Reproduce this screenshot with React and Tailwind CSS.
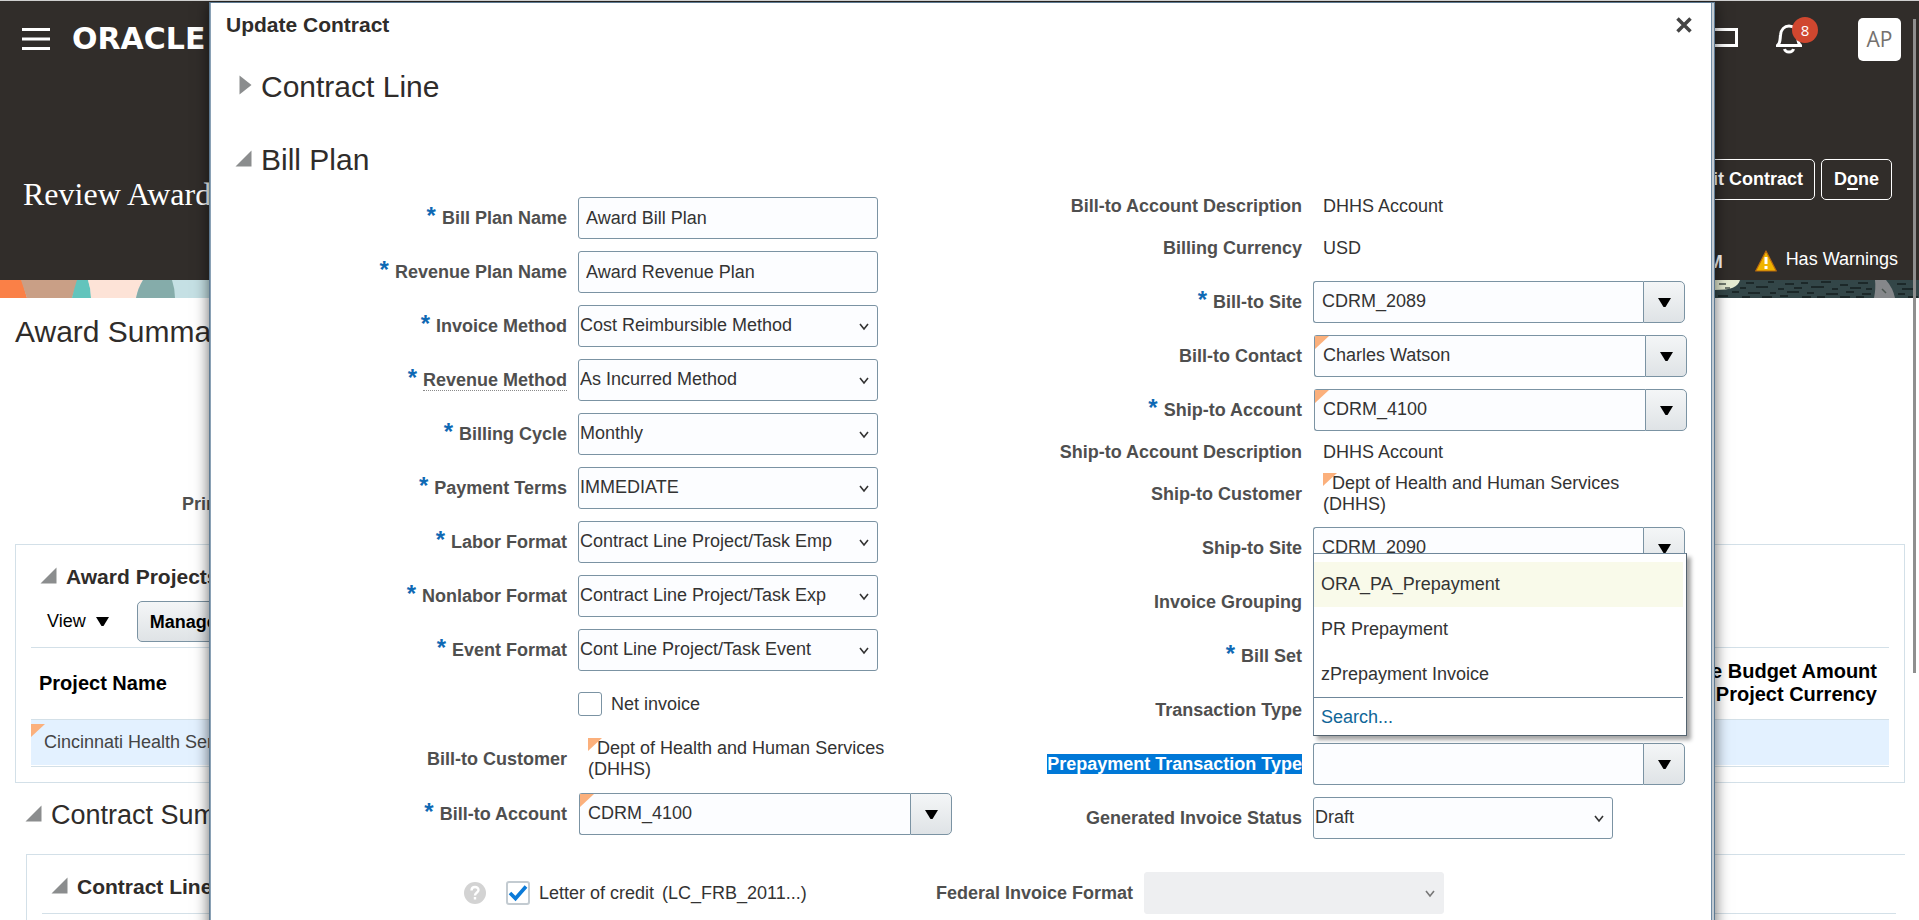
import { useId, useState } from "react";

const prepaymentTypes = ["ORA_PA_Prepayment", "PR Prepayment", "zPrepayment Invoice"];

function Expanded() {
  return (
    <svg width="17" height="17" viewBox="0 0 17 17" className="mb-1 shrink-0" aria-hidden="true">
      <path d="M16.500 0.500V16.500H0.500Z" fill="#8b8d8e" />
    </svg>
  );
}

function Collapsed() {
  return (
    <svg width="17" height="20" viewBox="0 0 17 20" className="mb-1 shrink-0" aria-hidden="true">
      <path d="M4.500 0.500V19.500L16.500 10Z" fill="#8b8d8e" />
    </svg>
  );
}

function DownArrow() {
  return (
    <svg width="13" height="9" viewBox="0 0 13 9" aria-hidden="true">
      <path d="M0 0H13L7.500 9H5.500Z" fill="#000" />
    </svg>
  );
}

// orange corner shown on values that open a contextual popup
function Corner({ className }) {
  return (
    <svg width="14" height="13" viewBox="0 0 14 13" className={`pointer-events-none absolute ${className}`} aria-hidden="true">
      <path d="M0 0H14L0 13Z" fill="#fbb07c" />
    </svg>
  );
}

function Label({ id, required, selected, dotted, children }) {
  return (
    <label htmlFor={id} className="text-right font-bold text-[#4f4f4f]">
      {required && <span className="mr-1.5 text-2xl leading-[0px] text-[#0f69b4]">*</span>}
      <span className={selected ? "bg-[#0078d7] text-white" : dotted ? "border-b border-dotted border-[#8a8a8a]" : ""}>
        {children}
      </span>
    </label>
  );
}

function TextField({ label, value }) {
  const id = useId();
  return (
    <>
      <Label id={id} required>{label}</Label>
      <input
        id={id}
        defaultValue={value}
        className="h-[42px] w-[300px] rounded-[3px] border border-[#7b93a3] bg-[#fcfdff] px-[7px]"
      />
    </>
  );
}

function Select({ id, value, disabled }) {
  return (
    <div className="relative w-[300px]">
      <select
        id={id}
        disabled={disabled}
        defaultValue={value}
        className="block h-[42px] w-full appearance-none rounded-[3px] border border-[#7b93a3] bg-[#fcfdff] pr-8 pb-0.5 pl-px disabled:border-[#eeeff1] disabled:bg-[#eeeff1]"
      >
        <option>{value}</option>
      </select>
      <svg width="10" height="8" viewBox="0 0 10 8" className="pointer-events-none absolute top-[18px] right-[9px]" aria-hidden="true">
        <path d="M1 1L5 6L9 1" fill="none" stroke={disabled ? "#777" : "#333"} strokeWidth="1.600" />
      </svg>
    </div>
  );
}

function SelectField({ label, value, required, dotted }) {
  const id = useId();
  return (
    <>
      <Label id={id} required={required} dotted={dotted}>{label}</Label>
      <Select id={id} value={value} />
    </>
  );
}

function ComboField({ label, value, required, corner, selected, children }) {
  const id = useId();
  return (
    <>
      <Label id={id} required={required} selected={selected}>{label}</Label>
      <div className={corner ? "relative ml-px flex h-[42px] w-[373px]" : "relative flex h-[42px] w-[372px]"}>
        <input
          id={id}
          defaultValue={value}
          className="min-w-0 flex-1 rounded-l-[3px] border border-r-0 border-[#7b93a3] bg-[#fcfdff] pr-2 pb-0.5 pl-2"
        />
        <button
          type="button"
          aria-label={label}
          className="flex w-[42px] items-center justify-center rounded-r-[5px] border border-[#7b93a3] bg-linear-to-b from-[#f4f6f7] to-[#dfe3e6]"
        >
          <DownArrow />
        </button>
        {corner && <Corner className="top-px left-px" />}
        {children}
      </div>
    </>
  );
}

function CustomerValue({ label, tall }) {
  return (
    <>
      <Label>{label}</Label>
      <div className={tall ? "my-px" : ""}>
        <div className="relative ml-2.5 w-[300px] indent-[9px] leading-[21px]">
          <Corner className="top-0 left-0" />
          Dept of Health and Human Services (DHHS)
        </div>
      </div>
    </>
  );
}

function ReadOnly({ label, value, tall }) {
  return (
    <div className={tall ? "col-span-2 grid min-h-[30px] grid-cols-subgrid items-start leading-[18px]" : "col-span-2 grid grid-cols-subgrid leading-[18px]"}>
      <Label>{label}</Label>
      <span className="ml-2.5">{value}</span>
    </div>
  );
}

function PrepaymentList({ active, onPick }) {
  return (
    <div className="absolute bottom-full left-0 z-10 mb-[7px] w-[374px] border border-[#6f879a] border-r-[#54636f] border-b-[#54636f] bg-white pt-2 pr-[3px] shadow-[4px_4px_4px_rgba(0,0,0,0.35)]">
      <ul>
        {prepaymentTypes.map((type) => (
          <li key={type}>
            <button
              type="button"
              onClick={() => onPick(type)}
              className={`flex h-[45px] w-full items-center pb-0.5 pl-[7px] ${type === active ? "bg-[#f9faea]" : ""}`}
            >
              {type}
            </button>
          </li>
        ))}
      </ul>
      <a href="#search" className="flex h-[38px] items-center border-t border-[#6f879a] pl-[7px] text-[#0f6698]">
        Search...
      </a>
    </div>
  );
}

function Header() {
  return (
    <header className="h-[279px] bg-[#312d2a] text-white">
      <div className="flex h-[76px] items-center pr-[18px] pl-[22px]">
        <button type="button" aria-label="Navigator">
          <svg width="28" height="22" viewBox="0 0 28 22" stroke="#fff" strokeWidth="3">
            <path d="M0 1.500H28M0 11H28M0 20.500H28" />
          </svg>
        </button>
        <span className="ml-[22px] font-['DejaVu_Sans',sans-serif] text-[30px] font-bold">ORACLE</span>
        <div className="ml-auto flex items-center">
          <svg width="38" height="19" viewBox="0 0 38 19" className="mr-[38px] mb-1" fill="none" stroke="#fff" strokeWidth="3">
            <path d="M1.500 1.500H36.500V17.500H1.500Z" />
          </svg>
          <button type="button" aria-label="Notifications" className="relative mr-14">
            <svg width="26" height="30" viewBox="0 0 26 30" fill="none" stroke="#fff" strokeWidth="3">
              <path d="M1.500 21.500C4.500 19 4 15 4.500 11C5 5.500 8.500 2 13 2C17.500 2 21 5.500 21.500 11C22 15 21.500 19 24.500 21.500Z" />
              <path d="M8.500 25C9.500 29 16.500 29 17.500 25" />
            </svg>
            <span className="absolute -top-[7px] left-4 flex size-[26px] items-center justify-center rounded-full bg-[#d0472f] font-['Open_Sans',sans-serif] text-[15px]">
              8
            </span>
          </button>
          <button
            type="button"
            className="size-[43px] rounded-[5px] bg-white font-['Open_Sans',sans-serif] text-[21px] text-[#75716e]"
          >
            AP
          </button>
        </div>
      </div>
      <div className="mt-[82px] flex items-start justify-between pr-[27px] pl-[23px]">
        <h1 className="mt-[15px] font-['Liberation_Serif',serif] text-[32px] leading-10">Review Award</h1>
        <div className="flex gap-1.5 font-bold">
          <button type="button" className="h-[41px] rounded-[5px] border border-white px-[11px] pb-0.5">Edit Contract</button>
          <button type="button" className="h-[41px] rounded-[5px] border border-white px-3 pb-0.5">
            D<span className="underline decoration-2 underline-offset-3">o</span>ne
          </button>
        </div>
      </div>
      <div className="mt-[33px] flex h-6 items-center justify-end pr-[21px]">
        <span className="mr-8 pt-1.5 font-bold">5:30 PM</span>
        <svg width="22" height="22" viewBox="0 0 22 22" className="mt-1" aria-hidden="true">
          <path d="M11 1L21.300 21H0.700Z" fill="#f0b400" stroke="#b8690f" strokeWidth="1.200" strokeLinejoin="round" />
          <path d="M11 7V14M11 16V19" stroke="#fff" strokeWidth="3" />
        </svg>
        <span className="ml-[9px]">Has Warnings</span>
      </div>
    </header>
  );
}

function Banner() {
  return (
    <div className="flex h-[18px] justify-between bg-[#334648]">
      <svg width="300" height="18" viewBox="0 0 300 18" aria-hidden="true">
        <rect width="300" height="18" fill="#c5e0e4" />
        <path d="M0 0H22L27 18H0Z" fill="#fa8047" />
        <path d="M21 0H78L72 18H27Z" fill="#c99f86" />
        <path d="M77 0H88Q91 9 91 18H72Q74 9 77 0Z" fill="#62c4bc" />
        <path d="M88 0H143Q138 8 136 18H91Q91 9 88 0Z" fill="#fde3d7" />
        <path d="M143 0H172Q175 9 175 18H136Q138 8 143 0Z" fill="#85acaa" />
      </svg>
      <svg width="229" height="18" viewBox="0 0 229 18" aria-hidden="true">
        <path d="M0 0H50C48 7 41 10 25 10H0Z" fill="#e6ecd2" />
        <path d="M185 0H196Q203 8 205 18H184Q186 8 185 0Z" fill="#85878a" />
        <path d="M29 4H36M35 8H40M192 9L196 13" stroke="#4b5550" strokeWidth="1.500" />
        <g stroke="#1c2829" strokeWidth="2">
          <path d="M56 3H64M78 2H84M95 4H104M111 3H118M131 2H141M150 5H158M168 3H178M207 4H216" />
          <path d="M50 8H56M66 7H78M88 9H94M104 8H112M121 7H134M142 9H148M160 8H171M176 9H182M212 9H224" />
          <path d="M42 12H49M58 13H70M80 13H86M97 12H109M117 13H124M136 14H148M156 12H164M172 14H181M208 14H215" />
          <path d="M28 16H38M52 17H60M72 17H82M90 16H98M112 17H121M127 17H135M150 17H160M166 17H174M218 17H228" />
        </g>
      </svg>
    </div>
  );
}

function AwardPage() {
  return (
    <main className="pr-[14px] pl-[15px]">
      <h2 className="pt-[14px] text-[30px] leading-[40px]">Award Summary</h2>
      <dl className="mt-[98px] w-[350px] text-right font-bold text-[#4f4f4f]">
        <dt className="h-[42px] leading-[24px]">Primary Sponsor</dt>
        <dt className="leading-[24px]">Principal Investigator</dt>
      </dl>
      <section className="mt-7 border border-[#d3e0e8] px-[15px] pb-[15px]">
        <h3 className="flex items-center gap-[9px] pt-5 pl-[9px] text-[21px] leading-6 font-bold">
          <Expanded />
          Award Projects
        </h3>
        <div className="mt-3 flex h-[47px] items-start border-b border-[#d3e0e8] text-black">
          <button type="button" className="flex h-10 items-center gap-2.5 pl-4">
            View <DownArrow />
          </button>
          <button
            type="button"
            className="ml-7 h-[41px] rounded-[5px] border border-[#7b93a3] bg-linear-to-b from-[#f4f6f7] to-[#dfe3e6] px-3 font-bold"
          >
            Manage Projects
          </button>
        </div>
        <table className="w-full">
          <thead>
            <tr className="h-[71px] border-b border-[#d3e0e8] text-xl leading-[23px] text-black">
              <th className="pl-2 text-left">Project Name</th>
              <th className="pr-3 text-right">
                Available Budget Amount
                <br />
                in Project Currency
              </th>
            </tr>
          </thead>
          <tbody>
            <tr className="h-[46px] bg-[#e3f1ff] text-[#444]">
              <td className="relative pl-[13px]">
                <Corner className="top-1 left-0" />
                Cincinnati Health Services
              </td>
              <td></td>
            </tr>
          </tbody>
        </table>
        <div className="mt-px border-b border-[#d3e0e8]"></div>
      </section>
      <h2 className="flex items-center gap-[9px] pt-[14px] pl-2.5 text-[27px] leading-9">
        <Expanded />
        Contract Summary
      </h2>
      <section className="mt-[21px] ml-[11px] border-t border-l border-[#d3e0e8] pr-[9px] pl-[15px]">
        <h3 className="flex items-center gap-[9px] pt-5 pl-[9px] text-[21px] leading-6 font-bold">
          <Expanded />
          Contract Lines
        </h3>
        <div className="mt-[14px] h-20 border-t border-[#d3e0e8]"></div>
      </section>
    </main>
  );
}

function UpdateContract() {
  const [picked, setPicked] = useState("ORA_PA_Prepayment");
  const net = useId();
  const letter = useId();
  const federal = useId();
  return (
    <div
      role="dialog"
      aria-label="Update Contract"
      className="absolute top-px right-[204px] left-[209px] border border-[#5e7a92] bg-[#c3cbd2] pr-[2px] shadow-[0_2px_14px_rgba(0,0,0,0.6)]"
    >
      <div className="border-r border-l border-r-[#6f8ba4] border-l-[#8aa1b5] bg-white pb-10">
        <div className="flex h-[47px] items-center justify-between pr-[19px] pb-[3px] pl-[15px]">
          <h2 className="text-[21px] font-bold">Update Contract</h2>
          <button type="button" aria-label="Close">
            <svg width="16" height="16" viewBox="0 0 16 16" stroke="#444" strokeWidth="3.500">
              <path d="M1.500 1.500L14.500 14.500M14.500 1.500L1.500 14.500" />
            </svg>
          </button>
        </div>
        <h3 className="flex h-[73px] items-center gap-[9px] pl-6 text-[30px]">
          <Collapsed />
          Contract Line
        </h3>
        <h3 className="flex h-[74px] items-center gap-[9px] pl-6 text-[30px]">
          <Expanded />
          Bill Plan
        </h3>
        <div className="grid grid-cols-2 items-start text-[#333]">
          <div className="grid grid-cols-[356px_1fr] items-center gap-x-[11px] gap-y-3">
            <TextField label="Bill Plan Name" value="Award Bill Plan" />
            <TextField label="Revenue Plan Name" value="Award Revenue Plan" />
            <SelectField label="Invoice Method" value="Cost Reimbursible Method" required />
            <SelectField label="Revenue Method" value="As Incurred Method" required dotted />
            <SelectField label="Billing Cycle" value="Monthly" required />
            <SelectField label="Payment Terms" value="IMMEDIATE" required />
            <SelectField label="Labor Format" value="Contract Line Project/Task Emp" required />
            <SelectField label="Nonlabor Format" value="Contract Line Project/Task Exp" required />
            <SelectField label="Event Format" value="Cont Line Project/Task Event" required />
            <div className="col-start-2 flex h-[42px] items-center gap-[9px]">
              <input id={net} type="checkbox" className="size-6 appearance-none rounded-[3px] border border-[#7b93a3] bg-white" />
              <label htmlFor={net}>Net invoice</label>
            </div>
            <CustomerValue label="Bill-to Customer" tall />
            <ComboField label="Bill-to Account" value="CDRM_4100" required corner />
          </div>
          <div className="grid grid-cols-[341px_1fr] items-center gap-x-[11px] gap-y-3">
            <ReadOnly label="Bill-to Account Description" value="DHHS Account" tall />
            <ReadOnly label="Billing Currency" value="USD" tall />
            <ComboField label="Bill-to Site" value="CDRM_2089" required />
            <ComboField label="Bill-to Contact" value="Charles Watson" corner />
            <ComboField label="Ship-to Account" value="CDRM_4100" required corner />
            <ReadOnly label="Ship-to Account Description" value="DHHS Account" />
            <CustomerValue label="Ship-to Customer" />
            <ComboField label="Ship-to Site" value="CDRM_2090" />
            <ComboField label="Invoice Grouping" />
            <ComboField label="Bill Set" required />
            <ComboField label="Transaction Type" />
            <ComboField label="Prepayment Transaction Type" selected>
              <PrepaymentList active={picked} onPick={setPicked} />
            </ComboField>
            <SelectField label="Generated Invoice Status" value="Draft" />
          </div>
        </div>
        <div className="mt-[33px] flex items-center gap-[11px] text-[#333]">
          <div className="flex w-[922px] items-center pl-[253px]">
            <svg width="22" height="22" viewBox="0 0 22 22" aria-hidden="true">
              <circle cx="11" cy="11" r="11" fill="#d3d3d3" />
              <path d="M7.500 8.500C7.500 4 14.500 4 14.500 8C14.500 10.500 11 10.500 11 13.500M11 15V17.500" fill="none" stroke="#fff" strokeWidth="2.400" />
            </svg>
            <span className="relative ml-5 flex">
              <input
                id={letter}
                type="checkbox"
                defaultChecked
                className="size-6 appearance-none rounded-[3px] border-2 border-[#c3cbd1] bg-white"
              />
              <svg width="24" height="24" viewBox="0 0 24 24" className="pointer-events-none absolute inset-0" aria-hidden="true">
                <path d="M4 12L9.500 17.500L20 5.500" fill="none" stroke="#0b7ad8" strokeWidth="3.600" />
              </svg>
            </span>
            <label htmlFor={letter} className="ml-[9px]">Letter of credit</label>
            <span className="ml-2">(LC_FRB_2011...)</span>
            <label htmlFor={federal} className="ml-auto font-bold text-[#4f4f4f]">Federal Invoice Format</label>
          </div>
          <Select id={federal} value="" disabled />
        </div>
      </div>
    </div>
  );
}

export default function App() {
  return (
    <div className="relative h-screen overflow-hidden border-t border-[#cfcfcf] bg-white font-['Liberation_Sans',Arial,sans-serif] text-lg leading-6 text-[#2f2c2a]">
      <Header />
      <Banner />
      <AwardPage />
      <div className="absolute top-[18px] right-[3px] h-[654px] w-[3px] bg-[#8f8f8f]"></div>
      <UpdateContract />
    </div>
  );
}
